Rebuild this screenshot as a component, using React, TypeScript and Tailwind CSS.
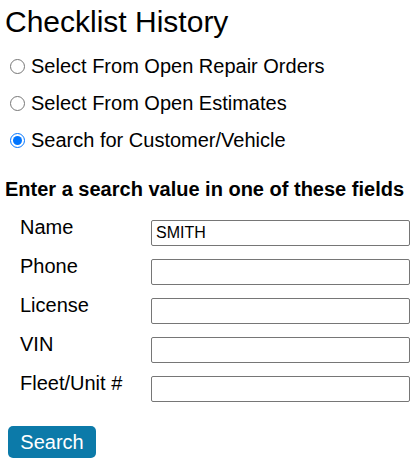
import React from 'react'

export default function App() {
  const options = [
    { label: 'Select From Open Repair Orders', checked: false },
    { label: 'Select From Open Estimates', checked: false },
    { label: 'Search for Customer/Vehicle', checked: true },
  ]
  const fields = [
    { label: 'Name', value: 'SMITH' },
    { label: 'Phone', value: '' },
    { label: 'License', value: '' },
    { label: 'VIN', value: '' },
    { label: 'Fleet/Unit #', value: '' },
  ]

  return (
    <div className="w-[416px] h-[464px] bg-white text-black font-['Liberation_Sans',Arial,sans-serif] pl-[5px] pt-[5px]">
      {/* Title */}
      <h1 className="text-[30px] leading-[34px] font-normal">Checklist History</h1>

      {/* Mode options */}
      <div className="mt-[9px]">
        {options.map((opt) => (
          <label key={opt.label} className="flex items-center h-[37px] text-[20px] leading-[23px]">
            <input
              type="radio"
              name="mode"
              defaultChecked={opt.checked}
              className="w-[15px] h-[15px] ml-[5px] mr-[6px] accent-[#0075ff]"
            />
            <span>{opt.label}</span>
          </label>
        ))}
      </div>

      {/* Search fields */}
      <h2 className="mt-[19px] text-[20px] leading-[23px] font-bold">
        Enter a search value in one of these fields
      </h2>

      <div className="mt-[15px] pl-[15px]">
        {fields.map((f) => (
          <div key={f.label} className="flex items-start h-[39px]">
            <span className="w-[131px] text-[20px] leading-[23px]">{f.label}</span>
            <input
              type="text"
              defaultValue={f.value}
              className="mt-[4px] w-[259px] h-[26px] border border-[#767676] rounded-[2px] px-[4px] text-[16px] text-black outline-none"
            />
          </div>
        ))}
      </div>

      <button className="mt-[15px] ml-[3px] w-[88px] h-[32px] rounded-[5px] bg-[#0c7aa9] text-white text-[20px] leading-[23px]">
        Search
      </button>
    </div>
  )
}
